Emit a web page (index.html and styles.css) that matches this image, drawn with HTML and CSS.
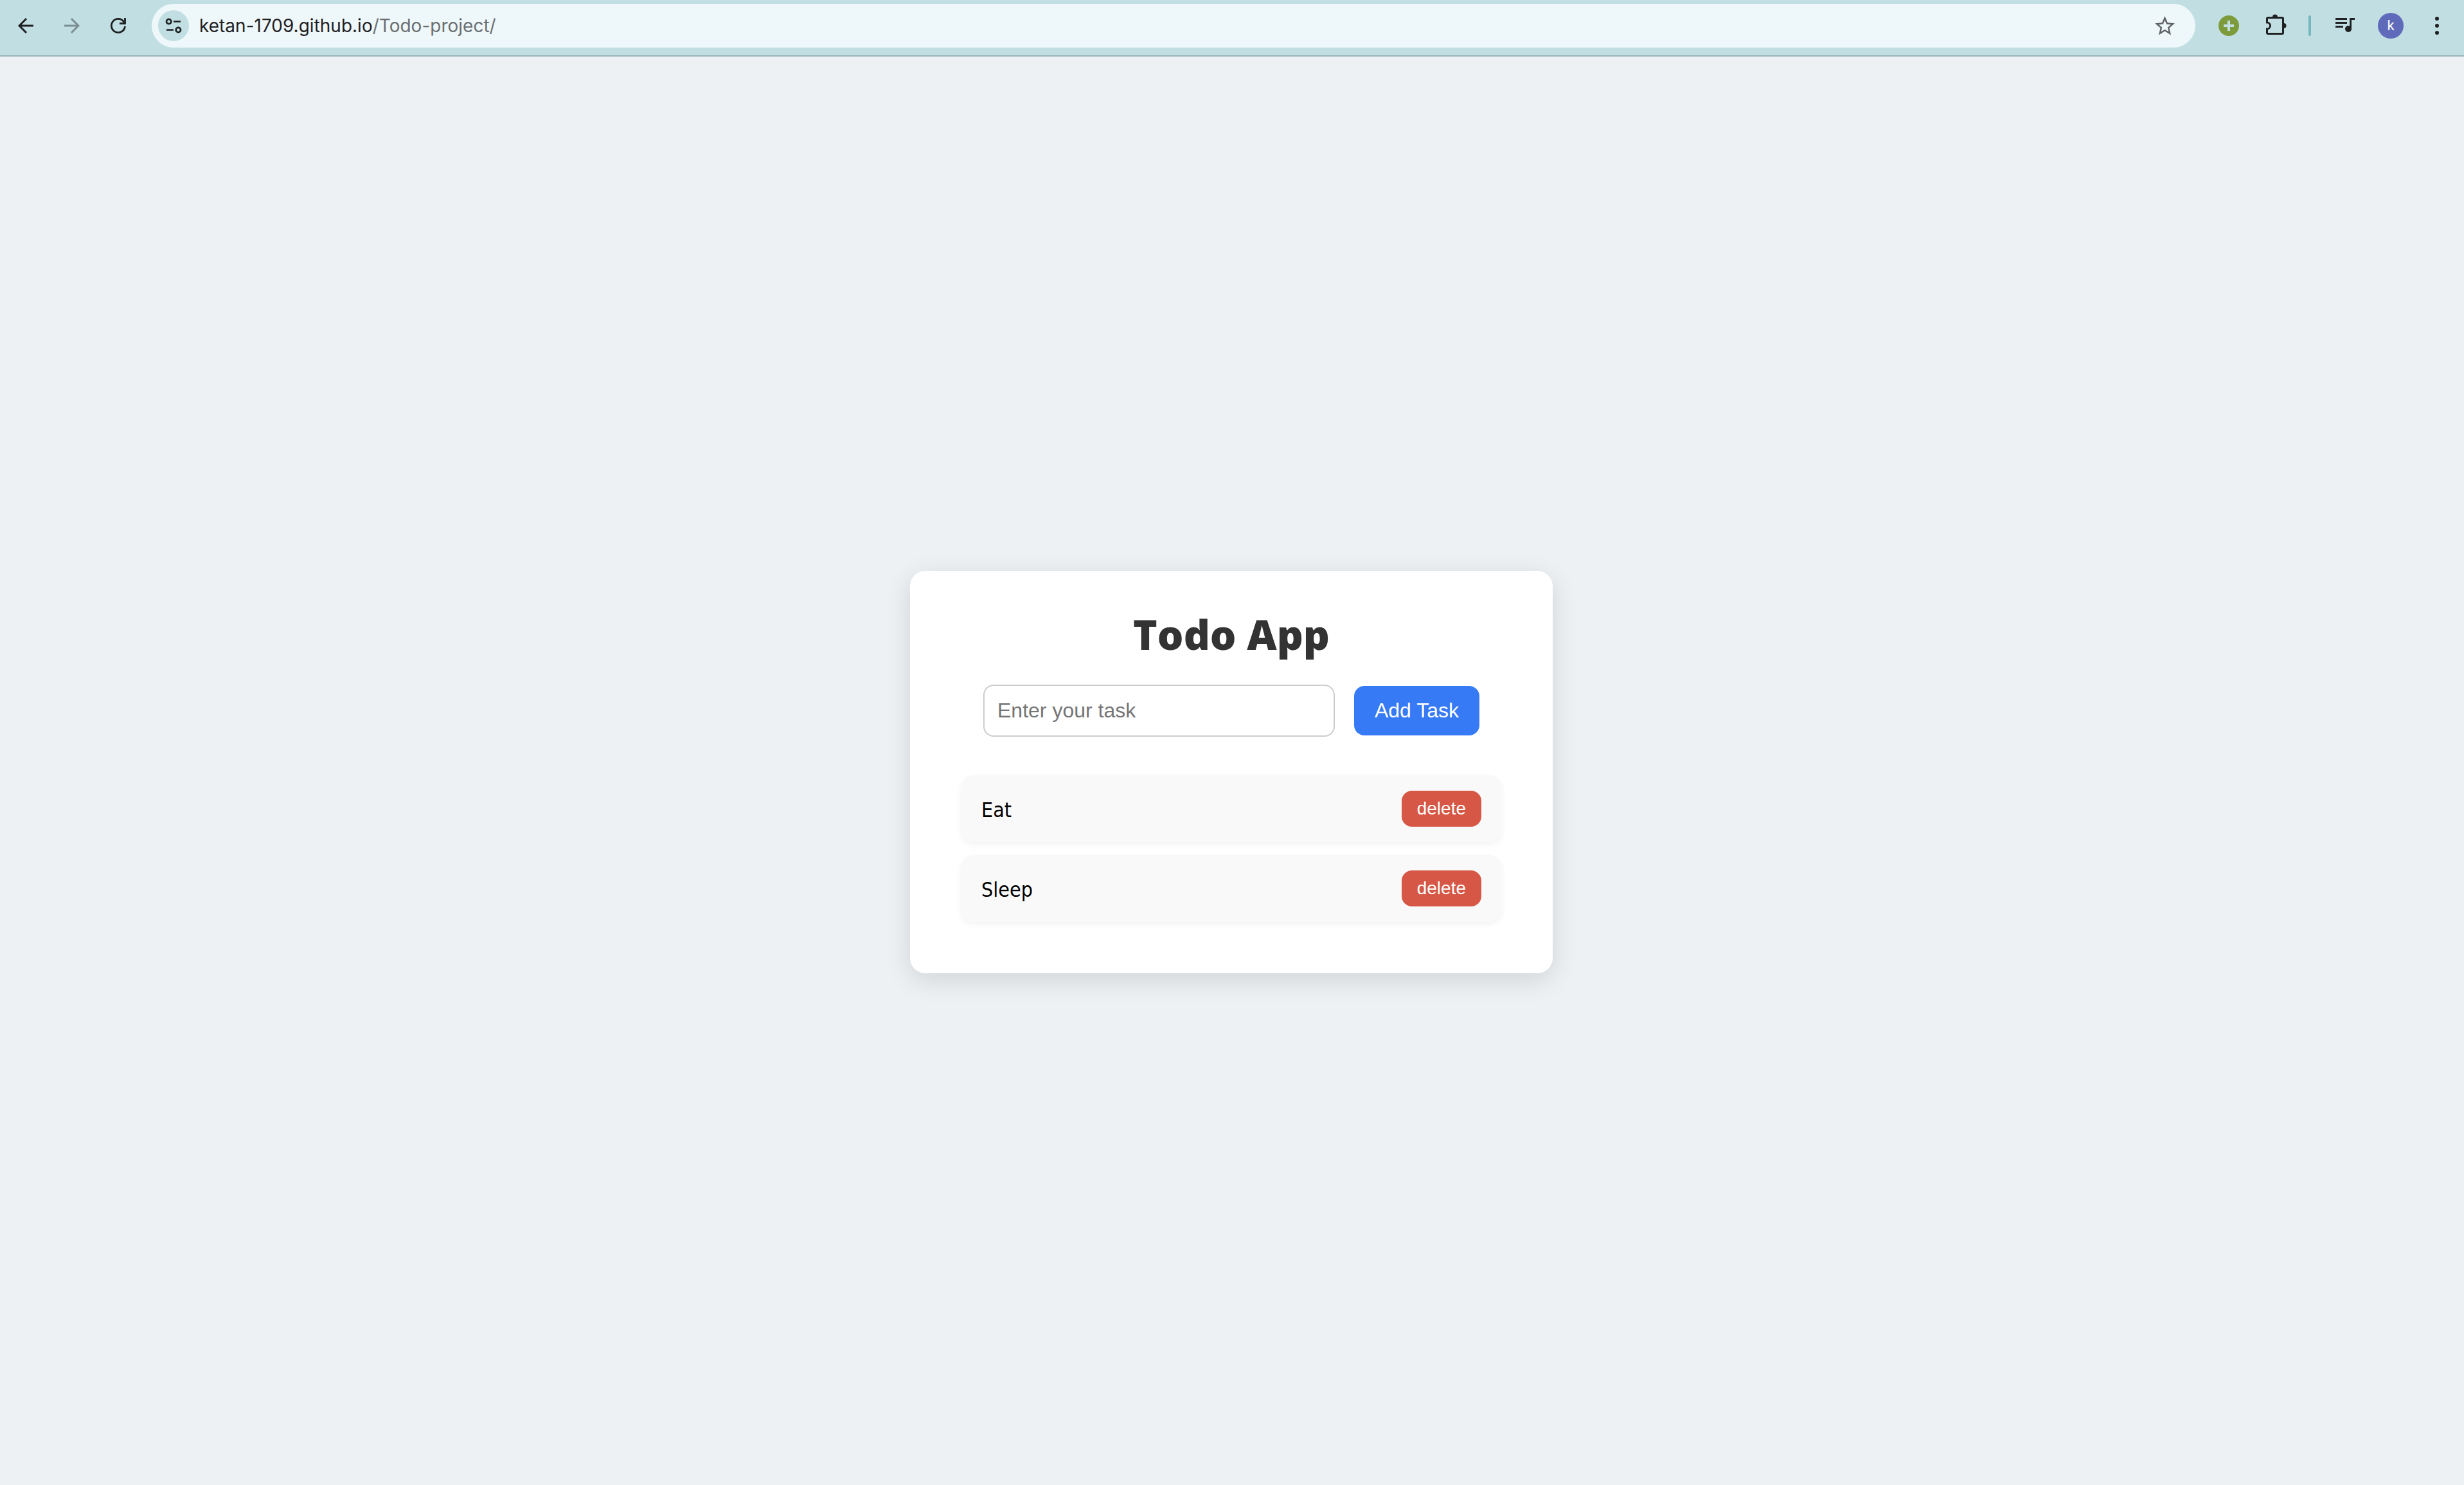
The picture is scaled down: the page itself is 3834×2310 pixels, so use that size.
FILE: index.html
```html
<!DOCTYPE html>
<html lang="en">
<head>
<meta charset="utf-8">
<title>Todo App</title>
<link rel="stylesheet" href="styles.css">
</head>
<body>
<header class="toolbar">
  <button class="tool" type="button" aria-label="Back">
    <svg width="24" height="24" viewBox="0 0 24 24" fill="none" stroke="currentColor" stroke-width="3"><path d="M24 12H2M13 1 2 12l11 11"/></svg>
  </button>
  <button class="tool tool-disabled" type="button" aria-label="Forward" disabled>
    <svg width="24" height="24" viewBox="0 0 24 24" fill="none" stroke="currentColor" stroke-width="3"><path d="M0 12h22M11 1l11 11-11 11"/></svg>
  </button>
  <button class="tool" type="button" aria-label="Reload">
    <svg width="24" height="24" viewBox="0 0 24 24" fill="none" stroke="currentColor" stroke-width="2.8"><path d="M22.5 13A10.6 10.6 0 1 1 20.6 5.8L22.5 8.5"/><path d="M22.5 0v8.5H14"/><path d="M18.5 8.5l4-4v4z" fill="currentColor" stroke="none"/></svg>
  </button>
  <div class="address">
    <button class="site-info" type="button" aria-label="Site information">
      <svg width="48" height="48" viewBox="0 0 48 48" fill="none" stroke="currentColor" stroke-width="2.7"><circle cx="16.7" cy="17.5" r="3.7"/><path d="M24 17.5h11M13 30.5h11"/><circle cx="31.4" cy="30.5" r="3.7"/></svg>
    </button>
    <a class="url" href="#">ketan-1709.github.io<span class="url-path">/Todo-project/</span></a>
    <button class="tool tool-star" type="button" aria-label="Bookmark">
      <svg width="37" height="37" viewBox="0 0 24 24" fill="currentColor"><path d="M22 9.24l-7.19-.62L12 2 9.19 8.63 2 9.24l5.46 4.73L5.82 21 12 17.27 18.18 21l-1.63-7.03L22 9.24zM12 15.4l-3.76 2.27 1-4.28-3.32-2.88 4.38-.38L12 6.1l1.71 4.04 4.38.38-3.32 2.88 1 4.28L12 15.4z"/></svg>
    </button>
  </div>
  <button class="tool" type="button" aria-label="Extension">
    <svg width="32" height="32" viewBox="0 0 32 32"><circle cx="16" cy="16" r="16" fill="#7d9b3a"/><path d="M16 8v16M8 16h16" stroke="#c1dfe2" stroke-width="4"/></svg>
  </button>
  <button class="tool" type="button" aria-label="Extensions">
    <svg width="40" height="40" viewBox="0 0 40 40" fill="none" stroke="currentColor" stroke-width="3"><path d="M7.500 15V9q0-1.500 1.500-1.500h22q1.500 0 1.500 1.500v22q0 1.500-1.500 1.500H9q-1.500 0-1.500-1.500v-6a5 5 0 0 0 0-10z"/><path d="M16 6.500a4 4 0 0 1 8 0zM33.500 16a4 4 0 0 1 0 8z" fill="currentColor" stroke="none"/><path d="M7.500 16.800v6.400" stroke="#c1dfe2" stroke-width="4"/></svg>
  </button>
  <span class="divider"></span>
  <button class="tool" type="button" aria-label="Media controls">
    <svg width="40" height="40" viewBox="0 0 40 40" fill="currentColor"><path d="M6 8h18v3H6zM6 14h18v3H6zM6 20h12v3H6zM28 8h8v3h-5v14h-3z"/><circle cx="26" cy="25" r="5"/></svg>
  </button>
  <button class="tool" type="button" aria-label="Profile"><span class="avatar">k</span></button>
  <button class="tool" type="button" aria-label="Menu">
    <svg width="6" height="28" viewBox="0 0 6 28" fill="currentColor"><circle cx="3" cy="3" r="3"/><circle cx="3" cy="14" r="3"/><circle cx="3" cy="25" r="3"/></svg>
  </button>
</header>
<main class="page">
  <section class="card">
    <h1 class="title">Todo App</h1>
    <form class="entry">
      <input class="entry-input" type="text" placeholder="Enter your task" aria-label="Enter your task">
      <button class="entry-add" type="button">Add Task</button>
    </form>
    <ul class="tasks">
      <li class="task"><span class="task-name">Eat</span><button class="task-delete" type="button">delete</button></li>
      <li class="task"><span class="task-name">Sleep</span><button class="task-delete" type="button">delete</button></li>
    </ul>
  </section>
</main>
</body>
</html>
```
FILE: styles.css
```css
* {
  box-sizing: border-box;
}

body {
  margin: 0;
  min-height: 100vh;
  display: flex;
  flex-direction: column;
  background: #edf1f4;
  font-family: "DejaVu Sans Condensed", Tahoma, "Noto Sans", sans-serif;
}

button {
  border: 0;
  padding: 0;
  background: none;
}

/* Browser toolbar */
.toolbar {
  display: flex;
  align-items: center;
  padding: 6px 6px 12px 4px;
  background: #c1dfe2;
  border-bottom: 2px solid #9bb3b8;
  color: #1f2123;
}

.tool {
  display: flex;
  flex: none;
  align-items: center;
  justify-content: center;
  width: 72px;
  height: 68px;
  color: inherit;
}

.tool-disabled {
  color: #7b8d92;
}

.tool-star {
  margin-left: auto;
  color: #5f6366;
}

.address {
  display: flex;
  flex: 1;
  align-items: center;
  height: 68px;
  margin: 0 16px;
  padding: 0 12px 0 10px;
  border-radius: 34px;
  background: #eef7f9;
}

.site-info {
  display: flex;
  width: 48px;
  height: 48px;
  border-radius: 50%;
  background: #c1dfe2;
  color: #1f2123;
}

.url {
  margin-left: 16px;
  color: #1f2123;
  font: 28px/36px Inter, sans-serif;
  text-decoration: none;
}

.url-path {
  color: #6a6f72;
}

.divider {
  width: 4px;
  height: 32px;
  margin: 0 16px;
  border-radius: 2px;
  background: #75b7bf;
}

.avatar {
  width: 40px;
  height: 40px;
  border-radius: 50%;
  background: #606aba;
  color: #fff;
  font: 22px/40px Roboto, sans-serif;
  text-align: center;
}

/* Todo card */
.page {
  display: flex;
  flex: 1;
  align-items: center;
  justify-content: center;
  padding: 4px 2px 0 0;
}

.card {
  width: 1000px;
  max-width: 100%;
  padding: 61px 79px 80px;
  border-radius: 24px;
  background: #fff;
  box-shadow: 0 10px 40px rgba(0, 0, 0, 0.12);
}

.title {
  margin: 0 0 40px;
  color: #333;
  font-family: "Open Sans", "Noto Sans", sans-serif;
  font-size: 64px;
  font-weight: 800;
  line-height: 76px;
  text-align: center;
}

.entry {
  display: flex;
  align-items: center;
  gap: 30px;
  margin: 0 35px 60px;
}

.entry-input {
  flex: 1;
  min-width: 0;
  height: 81px;
  padding: 0 20px;
  border: 2px solid #ccc;
  border-radius: 16px;
  background: #fff;
  font: 32px "Liberation Sans", Arial, sans-serif;
}

.entry-input::placeholder {
  color: #757575;
}

.entry-add {
  padding: 20px 32px;
  border-radius: 16px;
  background: #367af6;
  color: #fff;
  font: 32px/37px "Liberation Sans", Arial, sans-serif;
}

.tasks {
  display: flex;
  flex-direction: column;
  gap: 20px;
  margin: 0;
  padding: 0;
  list-style: none;
}

.task {
  display: flex;
  align-items: center;
  justify-content: space-between;
  padding: 24px 32px;
  border-radius: 20px;
  background: #f9f9f9;
  box-shadow: 0 4px 10px rgba(0, 0, 0, 0.05);
  color: #000;
  font-size: 32px;
  line-height: 40px;
}

.task-name {
  padding-top: 4px;
}

.task-delete {
  padding: 12px 24px;
  border-radius: 16px;
  background: #d65745;
  color: #fff;
  font: 28px/32px "Liberation Sans", Arial, sans-serif;
}
```
